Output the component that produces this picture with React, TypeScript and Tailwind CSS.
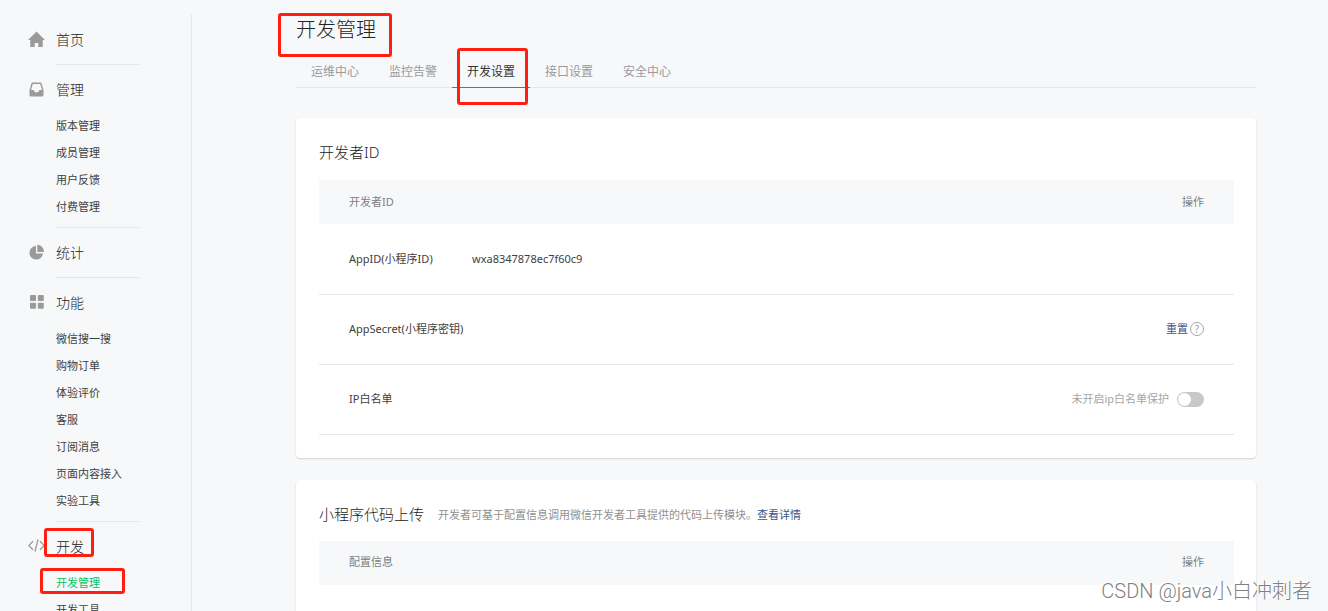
import type { ReactNode } from 'react';
import clsx from 'clsx';

type Group = { title: string; icon: ReactNode; items?: string[]; marked?: boolean };

const groups: Group[] = [
  {
    title: '首页',
    icon: <path d="M8.5 0.5 L17 9 H14.7 V16 H10.3 V12 H6.7 V16 H2.3 V9 H0 Z" />,
  },
  {
    title: '管理',
    icon: (
      <path
        fillRule="evenodd"
        d="M4.6 1.5 H12.4 Q13.2 1.5 13.5 2.3 L15.5 9 V14 Q15.5 15.5 14 15.5 H3 Q1.5 15.5 1.5 14 V9 L3.5 2.3 Q3.8 1.5 4.6 1.5 Z M4.8 2.9 L3 9 H5.6 Q6 11.4 8.5 11.4 Q11 11.4 11.4 9 H14 L12.2 2.9 Z"
      />
    ),
    items: ['版本管理', '成员管理', '用户反馈', '付费管理'],
  },
  {
    title: '统计',
    icon: (
      <>
        <path d="M8 2 V9.5 H15 A6.8 6.8 0 1 1 8 2 Z" />
        <path d="M9.3 0.8 A7 7 0 0 1 16 8 H9.3 Z" />
      </>
    ),
  },
  {
    title: '功能',
    icon: (
      <>
        <rect x="2" y="1" width="6" height="6" rx="1" />
        <rect x="9.8" y="1" width="6" height="6" rx="1" />
        <rect x="2" y="8.8" width="6" height="6" rx="1" />
        <rect x="9.8" y="8.8" width="6" height="6" rx="1" />
      </>
    ),
    items: ['微信搜一搜', '购物订单', '体验评价', '客服', '订阅消息', '页面内容接入', '实验工具'],
  },
  {
    title: '开发',
    icon: (
      <path
        d="M5 3.2 L0.8 7.5 L5 11.8 M12 3.2 L16.2 7.5 L12 11.8 M10 1.5 L7 13.5"
        fill="none"
        stroke="currentColor"
        strokeWidth="1.3"
      />
    ),
    items: ['开发管理', '开发工具'],
    marked: true,
  },
];

const tabs = ['运维中心', '监控告警', '开发设置', '接口设置', '安全中心'];

function Mark({ className }: { className: string }) {
  return (
    <span
      aria-hidden="true"
      className={clsx('pointer-events-none absolute rounded-[3px] border-3 border-[#ff1f12]', className)}
    />
  );
}

function NavGroup({ group, last }: { group: Group; last: boolean }) {
  const { title, icon, items, marked } = group;
  return (
    <li className="pt-[13px]">
      <a href="#" className="relative flex h-[22px] items-center gap-[11px] text-[14px]">
        <svg viewBox="0 0 17 17" className="size-[17px] text-[#9a9a9a]" fill="currentColor">
          {icon}
        </svg>
        {title}
        {marked && <Mark className="-top-[7px] left-4 h-[29px] w-[50px]" />}
      </a>
      <div
        className={clsx(
          'ml-7 mr-[52px]',
          !last && 'border-b border-[#e4e6ea]',
          items ? 'pb-1.5 pt-[13px]' : 'pb-3.5',
        )}
      >
        {items && (
          <ul className="text-[11px] font-normal text-[#404040]">
            {items.map((item) => {
              const active = item === '开发管理';
              return (
                <li key={item} className="relative flex h-[27px] items-center whitespace-nowrap">
                  <a href="#" className={clsx(active && 'text-[#07c160]')}>
                    {item}
                  </a>
                  {active && <Mark className="-left-4 -top-0.5 h-[26px] w-[85px]" />}
                </li>
              );
            })}
          </ul>
        )}
      </div>
    </li>
  );
}

function Card({ children }: { children: ReactNode }) {
  return (
    <section className="rounded bg-white pb-[23px] pl-[23px] pr-[22px] pt-[22px] shadow-[0_1px_2px_rgba(0,0,0,0.16)]">
      {children}
    </section>
  );
}

function Row({ label, value, children }: { label?: string; value?: string; children?: ReactNode }) {
  return (
    <tr className="h-[70px] border-b border-[#e4e6ea]">
      <td className="pl-[30px]">{label}</td>
      <td>{value}</td>
      <td className="pr-[30px]">
        <div className="flex items-center justify-end">{children}</div>
      </td>
    </tr>
  );
}

function HeadRow({ label }: { label: string }) {
  return (
    <thead>
      <tr className="h-11 bg-[#f7f8fa] text-[#808080]">
        <th className="w-[153px] pl-[30px] text-left font-normal">{label}</th>
        <th />
        <th className="w-[200px] pr-[30px] text-right font-normal">操作</th>
      </tr>
    </thead>
  );
}

export default function App() {
  return (
    <div className="relative flex h-screen overflow-hidden bg-[#f7f8fa] font-['Noto_Sans','Noto_Sans_CJK_SC',sans-serif] font-light text-[#222]">
      <aside className="w-48 shrink-0 pt-3.5">
        <nav className="min-h-full border-r border-[#e4e6ea] pl-7 pt-px">
          <ul>
            {groups.map((group, i) => (
              <NavGroup key={group.title} group={group} last={i === groups.length - 1} />
            ))}
          </ul>
        </nav>
      </aside>

      <main className="min-w-0 flex-1 pl-[104px] pr-[72px] pt-[15px]">
        <h1 className="relative w-fit text-[20px] leading-[30px]">
          开发管理
          <Mark className="-left-[18px] -top-0.5 h-11 w-[114px]" />
        </h1>

        <div className="mt-[11px] flex h-8 border-b border-[#e4e6ea] text-[12px] font-normal text-[#9a9a9a]">
          {tabs.map((tab) => {
            const active = tab === '开发设置';
            return (
              <a
                key={tab}
                href="#"
                className={clsx(
                  'relative -mb-px flex items-center px-[15px]',
                  active && 'border-b border-[#1aad19] text-[#333]',
                )}
              >
                {tab}
                {active && <Mark className="-top-2 left-[5px] h-[57px] w-[71px]" />}
              </a>
            );
          })}
        </div>

        <div className="mt-[30px] flex flex-col gap-[22px]">
          <Card>
            <h2 className="mb-4 text-[15px] leading-6">开发者ID</h2>
            <table className="w-full table-fixed text-[11px] font-normal text-[#404040]">
              <HeadRow label="开发者ID" />
              <tbody>
                <Row label="AppID(小程序ID)" value="wxa8347878ec7f60c9" />
                <Row label="AppSecret(小程序密钥)">
                  <a href="#" className="text-[#3d5488]">
                    重置
                  </a>
                  <button
                    type="button"
                    aria-label="帮助"
                    className="ml-0.5 flex size-3.5 items-center justify-center rounded-full border border-[#a5a5a5] text-[10px] leading-none text-[#9a9a9a]"
                  >
                    ?
                  </button>
                </Row>
                <Row label="IP白名单">
                  <label htmlFor="ip-guard" className="text-[#a5a5a5]">
                    未开启ip白名单保护
                  </label>
                  <input
                    id="ip-guard"
                    type="checkbox"
                    className="ml-2 h-[15px] w-[27px] appearance-none rounded-full bg-[#c8c8c8] p-px before:block before:size-[13px] before:rounded-full before:bg-white checked:bg-[#07c160] checked:before:ml-3"
                  />
                </Row>
              </tbody>
            </table>
          </Card>

          <Card>
            <div className="mb-[15px] flex h-6 items-start gap-3.5 whitespace-nowrap">
              <h2 className="text-[15px] leading-6">小程序代码上传</h2>
              <p className="text-[11px] font-normal leading-[26px] text-[#909090]">
                开发者可基于配置信息调用微信开发者工具提供的代码上传模块。
                <a href="#" className="text-[#3d5488]">
                  查看详情
                </a>
              </p>
            </div>
            <table className="w-full table-fixed text-[11px] font-normal text-[#404040]">
              <HeadRow label="配置信息" />
              <tbody>
                <Row />
              </tbody>
            </table>
          </Card>
        </div>
      </main>

      <p className="pointer-events-none absolute bottom-1.5 right-4 font-['Roboto','Noto_Sans_CJK_SC',sans-serif] text-[20px] leading-7 text-[#808080] [text-shadow:-1px_-1px_0_#fff]">
        CSDN @java小白冲刺者
      </p>
    </div>
  );
}
